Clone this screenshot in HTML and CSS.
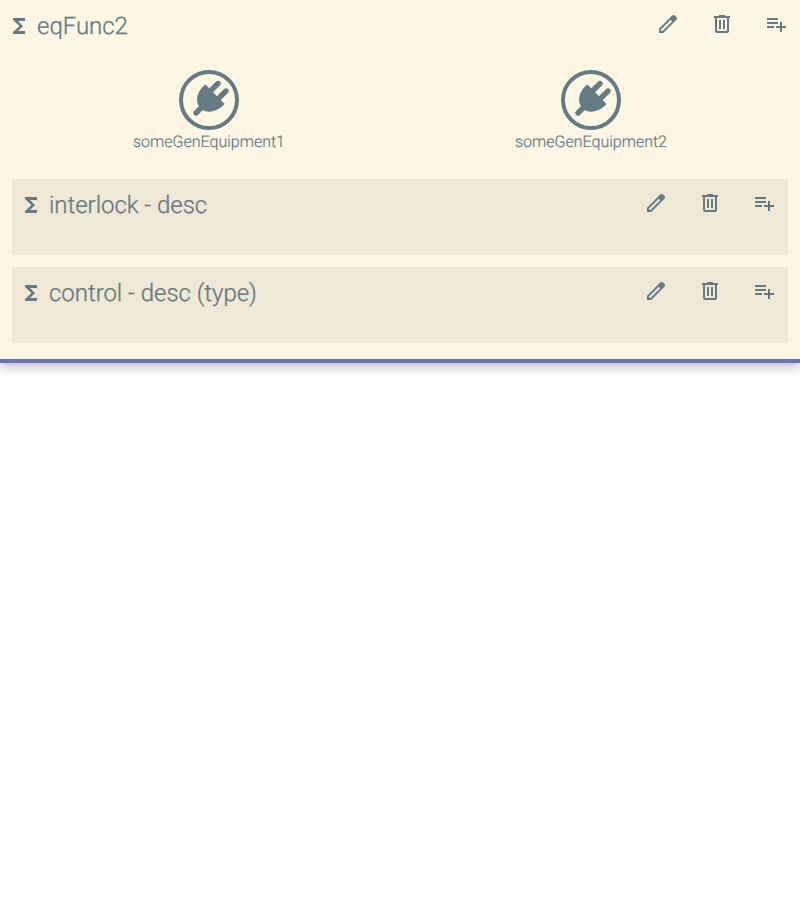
FILE: index.html
```html
<!DOCTYPE html>
<html lang="en">
<head>
<meta charset="utf-8">
<title>eqFunc2</title>
<link rel="stylesheet" href="styles.css">
</head>
<body>
<svg class="defs" width="0" height="0">
  <symbol id="sigma" viewBox="0 0 24 24"><path d="M18 4H6v2l6.5 6L6 18v2h12v-3h-7l5-5-5-5h7z"/></symbol>
  <symbol id="edit" viewBox="0 0 24 24"><path fill-rule="evenodd" d="M5 19h1.425L16.2 9.225 14.775 7.800 5 17.575zM3 21v-4.250L16.200 3.575q.300-.275.663-.425t.762-.150.775.150.650.450L20.425 5q.300.275.437.650T21 6.400q0 .400-.138.763t-.437.662L7.250 21z"/></symbol>
  <symbol id="delete" viewBox="0 0 24 24"><path d="M15 4V3H9v1H4v2h1v13c0 1.1.9 2 2 2h10c1.1 0 2-.9 2-2V6h1V4h-5zm2 15H7V6h10v13zM9 8h2v9H9zm4 0h2v9h-2z"/></symbol>
  <symbol id="add" viewBox="0 0 24 24"><path d="M14 10H3v2h11v-2zm0-4H3v2h11V6zm4 8v-4h-2v4h-4v2h4v4h2v-4h4v-2h-4zM3 16h7v-2H3v2z"/></symbol>
  <symbol id="plug" viewBox="0 0 60 60">
    <circle cx="30" cy="30" r="28" fill="none" stroke="currentColor" stroke-width="4"/>
    <path d="M26.500 14.500L45.500 34C40 40.500 29 45 21.500 38.500C15 31 18 21 26.500 14.500z"/>
    <path d="M31 21.500L39 13.500M39 29L47 21M17 43L23 37" fill="none" stroke="currentColor" stroke-width="5.400" stroke-linecap="round"/>
  </symbol>
</svg>
<main class="panel">
  <header class="bar">
    <svg class="icon sigma"><use href="#sigma"/></svg>
    <h1 class="title">eqFunc2</h1>
    <nav class="actions">
      <svg class="icon"><use href="#edit"/></svg>
      <svg class="icon"><use href="#delete"/></svg>
      <svg class="icon"><use href="#add"/></svg>
    </nav>
  </header>
  <div class="equipment">
    <figure class="item"><svg class="plug"><use href="#plug"/></svg><figcaption>someGenEquipment1</figcaption></figure>
    <figure class="item"><svg class="plug"><use href="#plug"/></svg><figcaption>someGenEquipment2</figcaption></figure>
  </div>
  <section class="card">
    <header class="bar">
      <svg class="icon sigma"><use href="#sigma"/></svg>
      <h2 class="title">interlock - desc</h2>
      <nav class="actions">
        <svg class="icon"><use href="#edit"/></svg>
        <svg class="icon"><use href="#delete"/></svg>
        <svg class="icon"><use href="#add"/></svg>
      </nav>
    </header>
  </section>
  <section class="card">
    <header class="bar">
      <svg class="icon sigma"><use href="#sigma"/></svg>
      <h2 class="title">control - desc (type)</h2>
      <nav class="actions">
        <svg class="icon"><use href="#edit"/></svg>
        <svg class="icon"><use href="#delete"/></svg>
        <svg class="icon"><use href="#add"/></svg>
      </nav>
    </header>
  </section>
</main>
</body>
</html>
```
FILE: styles.css
```css
* { box-sizing: border-box; }
html { overflow: hidden; }
body { margin: 0; min-height: 100vh; background: #fff; font-family: Roboto, sans-serif; text-rendering: geometricPrecision; }
.defs { display: block; }
.panel {
  height: 359px;
  background: #fdf6e3;
  color: #657b83;
  outline: 4px solid #6c71c4;
  box-shadow: 0 8px 10px 1px rgba(0, 0, 0, .14), 0 3px 14px 2px rgba(0, 0, 0, .12), 0 5px 5px -3px rgba(0, 0, 0, .2);
}
.bar { display: flex; height: 52px; padding: 0 12px 0 7px; }
.icon { width: 24px; height: 24px; margin-top: 12px; fill: currentColor; flex: none; }
.sigma { margin-top: 14px; }
.title { margin: 0 0 0 6px; font-size: 24px; font-weight: 300; line-height: 52px; letter-spacing: -.03px; -webkit-text-stroke: .3px currentColor; }
.actions { display: flex; gap: 30px; margin-left: auto; }
.equipment { display: grid; grid-template-columns: 1fr 1fr; gap: 12px; padding: 18px 24px 0; height: 127px; }
.item { margin: 0; text-align: center; font-size: 16px; font-weight: 300; line-height: 24px; -webkit-text-stroke: .2px currentColor; }
.plug { display: block; width: 60px; height: 60px; margin: 0 auto; fill: currentColor; }
.card { height: 76px; margin: 0 12px 12px; background: #eee8d5; }
.card .bar { padding-right: 12px; }
```
